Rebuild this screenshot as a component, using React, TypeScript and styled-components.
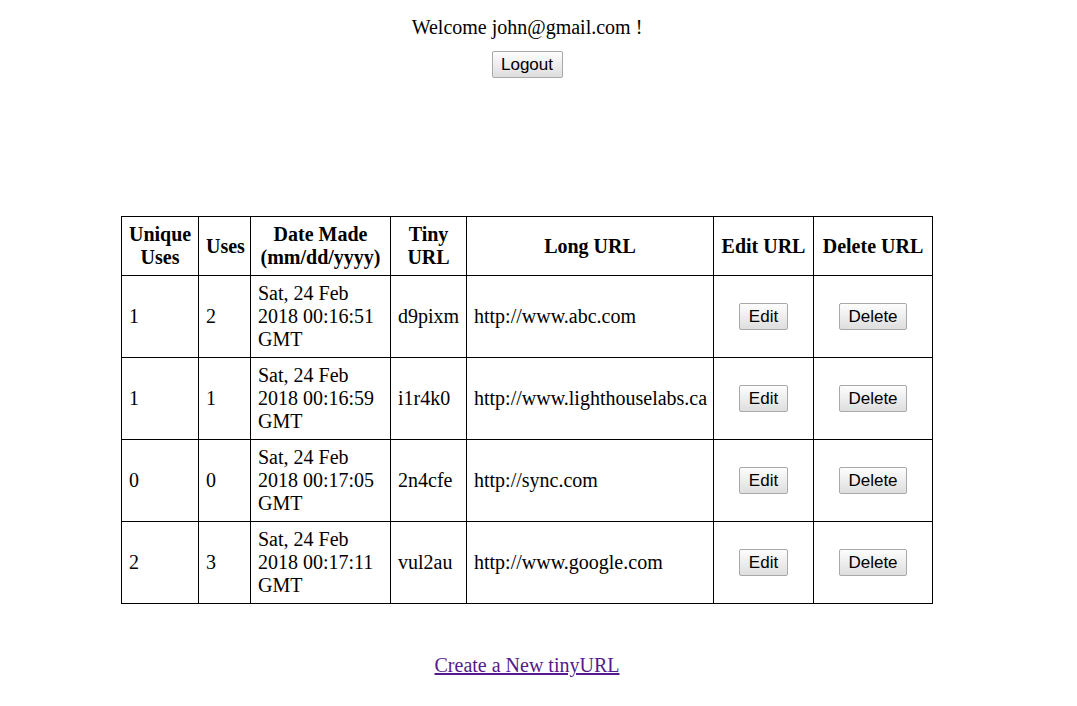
import React from "react";
import styled, { createGlobalStyle } from "styled-components";

const Global = createGlobalStyle`
  html, body { margin: 0; padding: 0; background: #fff; }
  body { font-family: "Liberation Serif", "Times New Roman", serif; font-size: 20px; color: #000; }
`;

const Page = styled.div`
  width: 1054px;
  padding-top: 16px;
  display: flex;
  flex-direction: column;
  align-items: center;
  text-align: center;
`;

const Welcome = styled.div`
  line-height: 23px;
`;

const Button = styled.button`
  font-family: "Liberation Sans", Arial, sans-serif;
  font-size: 17px;
  line-height: 19px;
  color: #000;
  padding: 3px 8.5px;
  border: 1px solid #a9a9a9;
  border-radius: 2px;
  background: linear-gradient(#fdfdfd, #dedede);
  cursor: pointer;
`;

const LogoutButton = styled(Button)`
  margin-top: 12px;
`;

const Table = styled.table`
  margin-top: 138px;
  width: 812px;
  border-collapse: collapse;
  table-layout: fixed;
`;

const Col = styled.col<{ $w: number }>`
  width: ${(p) => p.$w}px;
`;

const Th = styled.th`
  border: 1px solid #000;
  padding: 6px 7px;
  font-weight: bold;
  line-height: 23px;
  text-align: center;
  vertical-align: middle;
`;

const Td = styled.td<{ $center?: boolean }>`
  border: 1px solid #000;
  padding: 6px 7px;
  line-height: 23px;
  height: 69px;
  text-align: ${(p) => (p.$center ? "center" : "left")};
  vertical-align: middle;
`;

const NewLink = styled.a`
  margin-top: 50px;
  color: #551a8b;
  text-decoration: underline;
  line-height: 23px;
`;

const rows = [
  { unique: 1, uses: 2, date: "Sat, 24 Feb 2018 00:16:51 GMT", tiny: "d9pixm", long: "http://www.abc.com" },
  { unique: 1, uses: 1, date: "Sat, 24 Feb 2018 00:16:59 GMT", tiny: "i1r4k0", long: "http://www.lighthouselabs.ca" },
  { unique: 0, uses: 0, date: "Sat, 24 Feb 2018 00:17:05 GMT", tiny: "2n4cfe", long: "http://sync.com" },
  { unique: 2, uses: 3, date: "Sat, 24 Feb 2018 00:17:11 GMT", tiny: "vul2au", long: "http://www.google.com" },
];

const widths = [77, 52, 140, 76, 247, 100, 119];

export default function App() {
  return (
    <>
      <Global />
      <Page>
        <Welcome>Welcome john@gmail.com !</Welcome>
        <LogoutButton>Logout</LogoutButton>
        <Table>
          <colgroup>
            {widths.map((w, i) => (
              <Col key={i} $w={w} />
            ))}
          </colgroup>
          <thead>
            <tr>
              <Th>Unique Uses</Th>
              <Th>Uses</Th>
              <Th>Date Made (mm/dd/yyyy)</Th>
              <Th>Tiny URL</Th>
              <Th>Long URL</Th>
              <Th>Edit URL</Th>
              <Th>Delete URL</Th>
            </tr>
          </thead>
          <tbody>
            {rows.map((r) => (
              <tr key={r.tiny}>
                <Td>{r.unique}</Td>
                <Td>{r.uses}</Td>
                <Td>{r.date}</Td>
                <Td>{r.tiny}</Td>
                <Td>{r.long}</Td>
                <Td $center>
                  <Button>Edit</Button>
                </Td>
                <Td $center>
                  <Button>Delete</Button>
                </Td>
              </tr>
            ))}
          </tbody>
        </Table>
        <NewLink href="#">Create a New tinyURL</NewLink>
      </Page>
    </>
  );
}
